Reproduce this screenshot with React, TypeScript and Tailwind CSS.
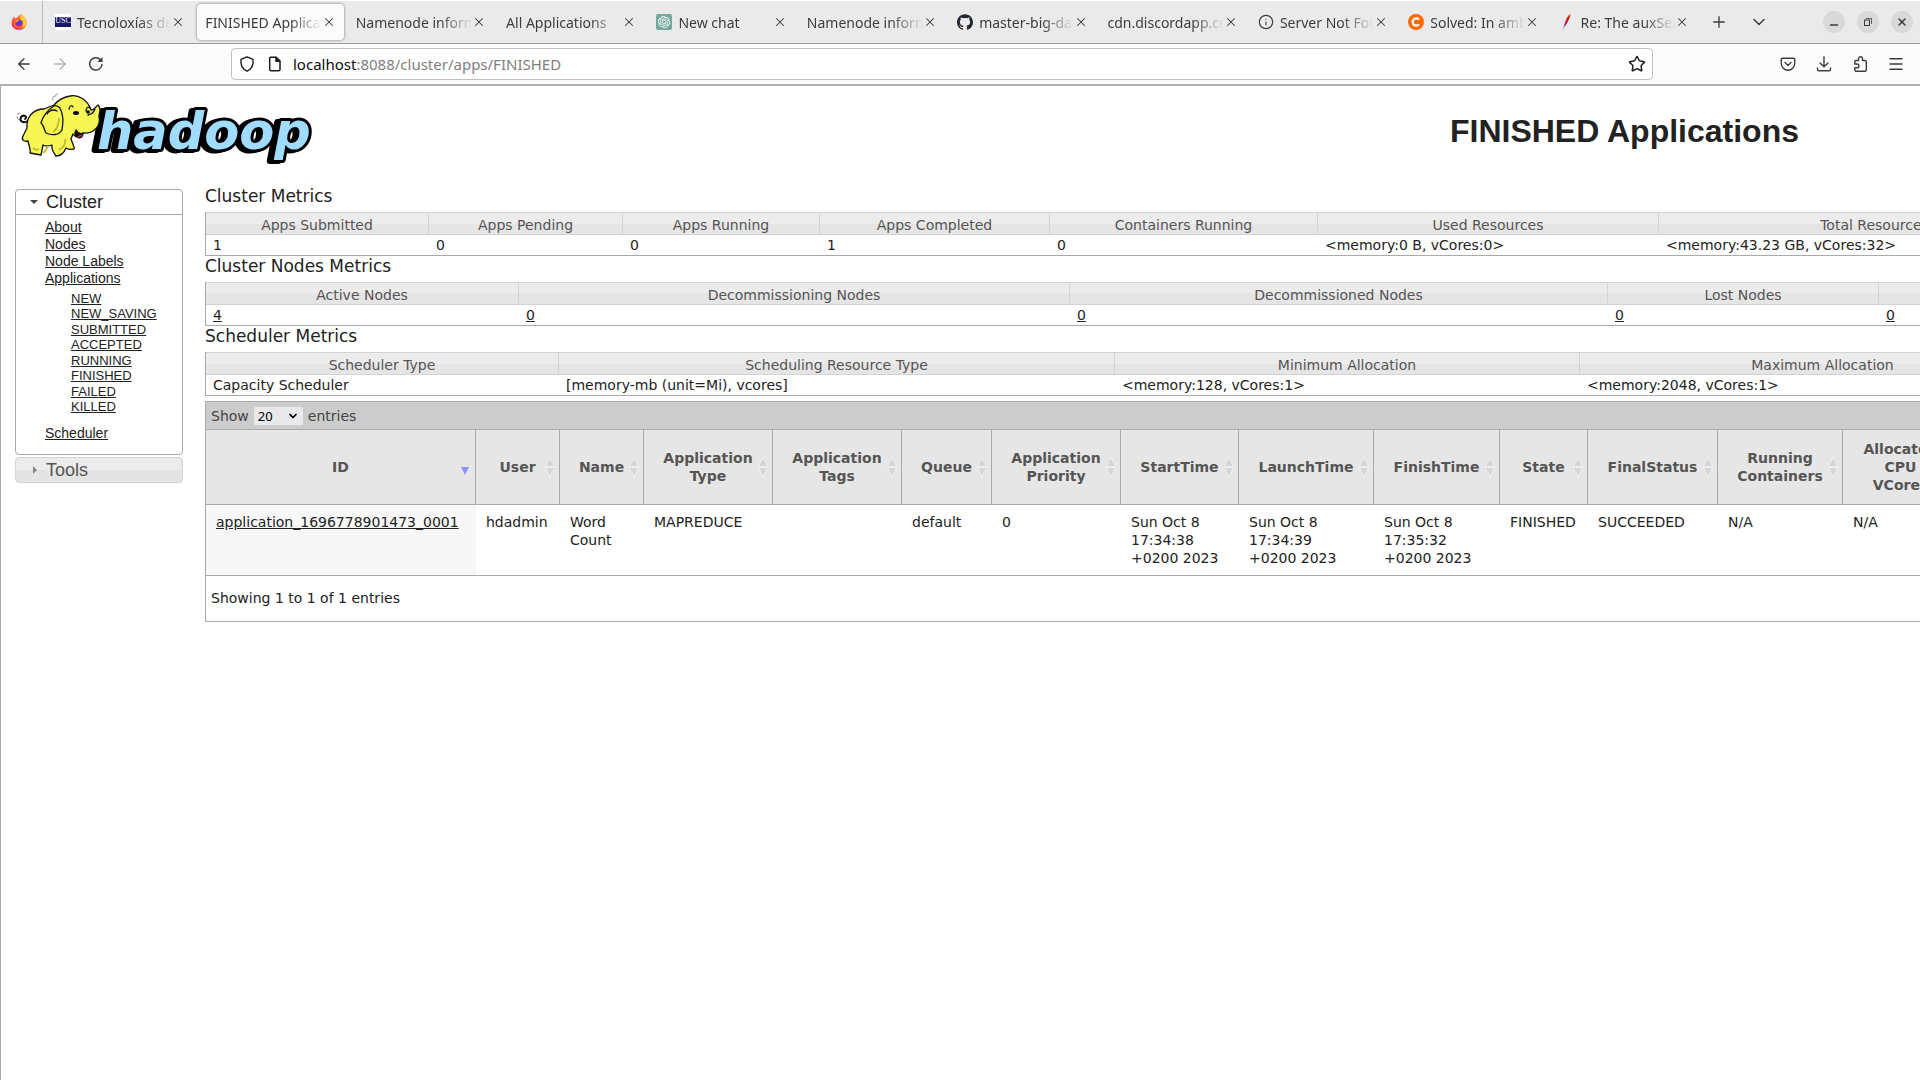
import React from "react";
import { SiOpenai, SiGithub } from "react-icons/si";
import { ArrowLeft, ArrowRight, ChevronDown, Info, Menu, Minus, Plus, Star, X } from "lucide-react";

const FirefoxIcon = () => (
  <svg viewBox="0 0 16 16" className="size-4" aria-hidden="true">
    <path d="M8 1.5C11 0 11 0 11.5 2.5C15 4.500 15.800 7 15.500 9.500C15 13.500 12 16 8 16C3.800 16 .6 13 .6 9C.6 6.500 1.500 4.200 3 2.500L4 4.500C5.500 3.800 7 3.500 8 1.5Z" fill="#ff5a36" />
    <path d="M9.500 0C14 2.500 16 6 15.500 9.500C14.800 12.500 12.500 14 10.500 13.500C13 11 12.500 7 9.500 5.500C8.500 3.500 8.500 1.500 9.500 0Z" fill="#ffc832" />
    <path d="M2 10C3 14 7 15.500 11 14C9 16 5 16 3 14C1 12.500 .5 10.500 1 8Z" fill="#ff2a6d" />
    <circle cx="8" cy="9" r="3.300" fill="#6a35c9" />
    <path d="M4.500 6C6 5.200 8 5.500 8.500 6.500C7 6.800 6.500 7.500 6.200 8.300C5 8.300 4.300 7.400 4.500 6Z" fill="#ff9640" />
  </svg>
);

const UscIcon = () => (
  <svg viewBox="0 0 16 16" className="size-4" aria-hidden="true">
    <rect width="16" height="16" fill="#fff" />
    <rect y="3" width="16" height="10" fill="#181866" />
    <text x="8" y="9" textAnchor="middle" fontSize="8" fill="#fff" fontFamily="Liberation Serif, serif">USC</text>
  </svg>
);

const ClouderaIcon = () => (
  <svg viewBox="0 0 16 16" className="size-4" aria-hidden="true">
    <circle cx="8" cy="8" r="8" fill="#ff6a00" />
    <path d="M11 5.400A3.700 3.700 0 1 0 11 10.600" fill="none" stroke="#fff" strokeWidth="2.200" />
  </svg>
);

const FeatherIcon = () => (
  <svg viewBox="0 0 16 16" className="size-4" aria-hidden="true">
    <path d="M11.500 0C9.500 1 7.500 4 6.600 7L8.600 7.500C10.500 4.500 11.500 2 11.500 0Z" fill="#e8622c" />
    <path d="M9.800 1.500C8.300 3 7 5.500 6 9L7.800 9.500C9.500 6.500 10.500 4 10.800 2Z" fill="#d22128" />
    <path d="M6.300 7.500C5.500 9.500 5 11.500 4.800 13L6 12.500C7 11 8 9.200 8.500 8Z" fill="#97307f" />
    <path d="M5.200 11.500L4 16" stroke="#b9a3cc" strokeWidth=".8" />
  </svg>
);

const ChatIcon = () => (
  <span className="flex size-4 items-center justify-center rounded-xs bg-[#75a99c] text-white">
    <SiOpenai className="size-3" />
  </span>
);

type Tab = { title: string; icon?: React.ReactNode; active?: boolean };

const tabs: Tab[] = [
  { title: "Tecnoloxías de xestión", icon: <UscIcon /> },
  { title: "FINISHED Applications", active: true },
  { title: "Namenode information" },
  { title: "All Applications" },
  { title: "New chat", icon: <ChatIcon /> },
  { title: "Namenode information" },
  { title: "master-big-data", icon: <SiGithub className="size-4 text-[#24292f]" /> },
  { title: "cdn.discordapp.com" },
  { title: "Server Not Found", icon: <Info className="size-4" strokeWidth={1.8} /> },
  { title: "Solved: In ambari", icon: <ClouderaIcon /> },
  { title: "Re: The auxService", icon: <FeatherIcon /> },
];

const TabStrip = () => (
  <div className="flex h-11 items-stretch border-t border-b border-t-white border-b-[#9c9c9c] bg-[#eaeaea] text-[#3d3d3d]">
    <button aria-label="Firefox View" className="flex w-[43px] shrink-0 items-center justify-center border-r border-[#bdbdbd] pr-1">
      <FirefoxIcon />
    </button>
    <div className="flex min-w-0 flex-1 pl-0.5">
      {tabs.map((t, i) => (
        <div key={i} className="min-w-0 flex-1 px-0.5 py-[3px]">
          <div
            className={
              t.active
                ? "flex h-full items-center rounded bg-[#fbfbfb] pr-2 pl-2 shadow-[0_0_3px_rgba(0,0,0,0.5)]"
                : "flex h-full items-center pr-2 pl-2"
            }
          >
            {t.icon && <span className="mr-1.5 shrink-0">{t.icon}</span>}
            <span className="min-w-0 flex-1 overflow-hidden pt-0.5 text-sm whitespace-nowrap [mask-image:linear-gradient(to_right,#000_calc(100%-32px),transparent)]">
              {t.title}
            </span>
            <button aria-label="Close tab" className="shrink-0">
              <X className="size-3.5" strokeWidth={1.8} />
            </button>
          </div>
        </div>
      ))}
    </div>
    <div className="flex shrink-0 items-center">
      <button aria-label="New tab" className="flex w-10 justify-center"><Plus className="size-[18px]" strokeWidth={1.8} /></button>
      <button aria-label="List all tabs" className="flex w-10 justify-center"><ChevronDown className="size-5" strokeWidth={1.8} /></button>
      <div className="ml-11 flex gap-3 pr-[7px]">
        <button aria-label="Minimize" className="flex size-[22px] items-end justify-center rounded-full bg-[#d9d9d9] pb-0.5"><Minus className="size-3" strokeWidth={3} /></button>
        <button aria-label="Restore" className="flex size-[22px] items-center justify-center rounded-full bg-[#d9d9d9]">
          <svg viewBox="0 0 10 10" className="size-2.5" fill="none" stroke="#3d3d3d" aria-hidden="true">
            <rect x="1.500" y="3" width="5" height="5.500" />
            <path d="M3 1.500H8.500V7" strokeWidth=".8" />
          </svg>
        </button>
        <button aria-label="Close" className="flex size-[22px] items-center justify-center rounded-full bg-[#d9d9d9]"><X className="size-3" strokeWidth={3} /></button>
      </div>
    </div>
  </div>
);

const Toolbar = () => (
  <div className="flex h-[42px] items-center border-b-2 border-[#b1b1b1] bg-[#fbfbfb] px-1.5 text-[#3d3d3d]">
    <button aria-label="Back" className="flex w-9 justify-center"><ArrowLeft className="size-[18px]" strokeWidth={1.8} /></button>
    <button aria-label="Forward" className="flex w-9 justify-center text-[#b5b5b5]"><ArrowRight className="size-[18px]" strokeWidth={1.8} /></button>
    <button aria-label="Reload" className="flex w-9 justify-center">
      <svg viewBox="0 0 16 16" className="size-4" fill="none" stroke="currentColor" strokeWidth="1.500" strokeLinecap="round" aria-hidden="true">
        <path d="M14 8.500A6.200 6.200 0 1 1 12.500 3.800" />
        <path d="M14.500 1V6H9.500Z" fill="currentColor" stroke="none" />
      </svg>
    </button>
    <div className="mr-[117px] ml-[117px] flex h-8 min-w-0 flex-1 items-center rounded border border-[#c0c0c0] bg-white pr-1.5 pl-[7px] text-[#1c1c1c]">
      <svg viewBox="0 0 16 16" className="size-4 shrink-0" fill="none" stroke="currentColor" strokeWidth="1.400" strokeLinejoin="round" aria-hidden="true">
        <path d="M8 .8L14 3.400C14.600 8 13 13 8 15.200C3 13 1.400 8 2 3.400Z" />
      </svg>
      <svg viewBox="0 0 16 16" className="ml-3 size-4 shrink-0" fill="none" stroke="currentColor" strokeWidth="1.500" strokeLinejoin="round" aria-hidden="true">
        <path d="M3.500 1.200H9L13 5.200V13.500Q13 14.800 11.700 14.800H4Q2.700 14.800 2.700 13.500V2Q2.700 1.200 3.500 1.200Z" />
        <path d="M9 1.200V5.200H13Z" fill="currentColor" />
      </svg>
      <p className="ml-2.5 flex-1 text-[15px] leading-5 text-[#808080]">
        <span className="text-[#0c0c0c]">localhost</span>:8088/cluster/apps/FINISHED
      </p>
      <button aria-label="Bookmark this page"><Star className="size-[18px]" strokeWidth={2} /></button>
    </div>
    <button aria-label="Save to Pocket" className="flex w-9 justify-center">
      <svg viewBox="0 0 16 16" className="size-4" fill="none" stroke="currentColor" strokeWidth="1.400" strokeLinecap="round" strokeLinejoin="round" aria-hidden="true">
        <path d="M2.500 2.200H13.500Q14.700 2.200 14.700 3.400V7.500A6.700 6.700 0 0 1 1.300 7.500V3.400Q1.300 2.200 2.500 2.200Z" />
        <path d="M5 6.500L8 9.400L11 6.500" />
      </svg>
    </button>
    <button aria-label="Downloads" className="flex w-9 justify-center">
      <svg viewBox="0 0 16 16" className="size-4" fill="none" stroke="currentColor" strokeWidth="1.400" strokeLinecap="round" strokeLinejoin="round" aria-hidden="true">
        <path d="M8 .8V10.500M4 7L8 10.800L12 7M1.500 12V13.500Q1.500 14.800 2.800 14.800H13.200Q14.500 14.800 14.500 13.500V12" />
      </svg>
    </button>
    <button aria-label="Extensions" className="flex w-9 justify-center">
      <svg viewBox="0 0 16 16" className="size-4" fill="none" stroke="currentColor" strokeWidth="1.400" strokeLinejoin="round" aria-hidden="true">
        <path d="M6.500 4.500V2.800A2 2 0 0 1 10.500 2.800V4.500H13Q14.300 4.500 14.300 5.800V14Q14.300 15.200 13 15.200H4Q2.800 15.200 2.800 14V11.800H5A1.900 1.900 0 0 0 5 8H2.800V5.800Q2.800 4.500 4 4.500Z" />
      </svg>
    </button>
    <button aria-label="Menu" className="flex w-9 justify-center"><Menu className="size-[18px]" strokeWidth={1.8} /></button>
  </div>
);

const HadoopLogo = () => (
  <svg viewBox="0 0 300 76" className="h-[76px] w-[300px] overflow-visible" role="img" aria-label="Hadoop">
    <text
      x="81"
      y="57"
      fontFamily="DejaVu Sans, sans-serif"
      fontWeight="bold"
      fontStyle="italic"
      fontSize="51"
      fill="#9fdcff"
      stroke="#000"
      strokeWidth="6"
      strokeLinejoin="round"
      className="[filter:drop-shadow(-4px_1px_0_#000)] [paint-order:stroke]"
    >
      hadoop
    </text>
    <g stroke="#111" strokeWidth="1.300" strokeLinejoin="round" strokeLinecap="round" fill="#f6f754">
      <path d="M12 29C7 32 3 29 5 25C8 22 12 25 9 27" fill="none" strokeWidth="2" />
      <path d="M28 17C18 17 10 24 11 36L7 44C5 48 8 50 12 49C13 54 15 58 14 61L25 63L27 53C30 55 33 54 36 53C35 57 37 60 40 64C44 64 48 61 50 56C53 58 60 58 58 55L55 47L57 42C61 47 65 45 67 41C78 42 85 34 83 24C83 21 86 17 82 13C80 14 79 18 75 18C72 8 62 2 54 4C48 5 42 8 38 13Z" />
      <path d="M38 14C31 18 26 26 25 31C28 33 28 38 30 41C36 44 43 43 46 38C47 30 48 24 44 16C42 14 40 13 38 14Z" />
      <path d="M31 22C33 18 38 17 41 19" fill="none" />
      <path d="M59 41C60 48 67 47 67 41C64 43 62 41 60 38Z" fill="#111" />
      <path d="M62 45Q64 43 66 44" stroke="#e0402a" fill="none" />
      <path d="M53 17C54 13 56 13 57 15M70 19C70 16 72 14 74 16M72 23Q77 22 79 17" fill="none" />
    </g>
    <path d="M32 54C30 58 29 60 27 61M43 58C48 55 50 51 49 47M37 40C41 38 43 31 43 26M17 56Q20 59 23 57" fill="none" stroke="#c3bf2c" strokeWidth="2" />
    <ellipse cx="60" cy="21" rx="3" ry="2" fill="#111" />
    <ellipse cx="72" cy="20" rx="2" ry="1.700" fill="#111" />
    <path d="M38 4Q36 5 37 8M42 2Q38 3 39 5M1 24Q1 27 3 28M4 21Q1 21 2 23" fill="none" stroke="#777" strokeWidth=".8" />
  </svg>
);

const linkCls = "underline underline-offset-1";
const clusterLinks = ["About", "Nodes", "Node Labels", "Applications"];
const states = ["NEW", "NEW_SAVING", "SUBMITTED", "ACCEPTED", "RUNNING", "FINISHED", "FAILED", "KILLED"];

const Sidebar = () => (
  <nav className="w-[168px] shrink-0">
    <section className="rounded border border-[#aaa]">
      <h3 className="flex h-[25px] items-center border-b border-[#aaa] pl-[14px] text-lg leading-6">
        <svg viewBox="0 0 8 4" className="mr-2 h-1 w-2" aria-hidden="true"><path d="M0 0H8L4 4Z" fill="#444" /></svg>
        Cluster
      </h3>
      <ul className="pt-1 pb-3 pl-[29px] text-sm leading-[17px]">
        {clusterLinks.map((l) => (
          <li key={l}><a href="#" className={linkCls}>{l}</a></li>
        ))}
        <li className="py-1">
          <ul className="mb-[7px] flex h-[123px] flex-col justify-between pl-[26px] text-[13px] leading-[15px]">
            {states.map((s) => (
              <li key={s}><a href="#" className={linkCls}>{s}</a></li>
            ))}
          </ul>
        </li>
        <li><a href="#" className={linkCls}>Scheduler</a></li>
      </ul>
    </section>
    <h3 className="mt-0.5 flex h-[26px] items-center rounded border border-[#d3d3d3] bg-linear-to-b from-[#ececec] from-50% to-[#e4e4e4] to-50% pl-[17px] text-lg leading-6 text-[#555]">
      <svg viewBox="0 0 4 8" className="mr-[9px] h-2 w-1" aria-hidden="true"><path d="M0 0V8L4 4Z" fill="#888" /></svg>
      Tools
    </h3>
  </nav>
);

type Col = { label: string; value: string; w: string };

const clusterMetrics: Col[] = [
  { label: "Apps Submitted", value: "1", w: "w-[223px]" },
  { label: "Apps Pending", value: "0", w: "w-[194px]" },
  { label: "Apps Running", value: "0", w: "w-[197px]" },
  { label: "Apps Completed", value: "1", w: "w-[230px]" },
  { label: "Containers Running", value: "0", w: "w-[268px]" },
  { label: "Used Resources", value: "<memory:0 B, vCores:0>", w: "w-[341px]" },
  { label: "Total Resources", value: "<memory:43.23 GB, vCores:32>", w: "w-[432px]" },
];

const nodeMetrics: Col[] = [
  { label: "Active Nodes", value: "4", w: "w-[313px]" },
  { label: "Decommissioning Nodes", value: "0", w: "w-[551px]" },
  { label: "Decommissioned Nodes", value: "0", w: "w-[538px]" },
  { label: "Lost Nodes", value: "0", w: "w-[271px]" },
  { label: "", value: "0", w: "w-[212px]" },
];

const schedulerMetrics: Col[] = [
  { label: "Scheduler Type", value: "Capacity Scheduler", w: "w-[353px]" },
  { label: "Scheduling Resource Type", value: "[memory-mb (unit=Mi), vcores]", w: "w-[556px]" },
  { label: "Minimum Allocation", value: "<memory:128, vCores:1>", w: "w-[465px]" },
  { label: "Maximum Allocation", value: "<memory:2048, vCores:1>", w: "w-[486px]" },
  { label: "", value: "", w: "w-[25px]" },
];

const Metrics = ({ title, cols, links }: { title: string; cols: Col[]; links?: boolean }) => (
  <section>
    <h3 className="h-[26px] text-[17px] leading-5">{title}</h3>
    <table className="w-[1885px] table-fixed border-separate border-spacing-0 border-l border-[#aaa]">
      <thead>
        <tr>
          {cols.map((c, i) => (
            <th key={i} className={`${c.w} h-[23px] border-y border-r border-[#d3d3d3] bg-linear-to-b from-[#ececec] from-50% to-[#e5e5e5] to-50% p-0 pt-0.5 text-center leading-[18px] font-normal text-[#555]`}>
              {c.label}
            </th>
          ))}
        </tr>
      </thead>
      <tbody>
        <tr>
          {cols.map((c, i) => (
            <td key={i} className="h-[21px] border-b border-[#aaa] p-0 pl-[7px] leading-[18px] whitespace-nowrap">
              {links ? <a href="#" className={linkCls}>{c.value}</a> : c.value}
            </td>
          ))}
        </tr>
      </tbody>
    </table>
  </section>
);

const appCols: Col[] = [
  { label: "ID", value: "application_1696778901473_0001", w: "w-[270px]" },
  { label: "User", value: "hdadmin", w: "w-[84px]" },
  { label: "Name", value: "Word Count", w: "w-[84px]" },
  { label: "Application Type", value: "MAPREDUCE", w: "w-[129px]" },
  { label: "Application Tags", value: "", w: "w-[129px]" },
  { label: "Queue", value: "default", w: "w-[90px]" },
  { label: "Application Priority", value: "0", w: "w-[129px]" },
  { label: "StartTime", value: "Sun Oct 8 17:34:38 +0200\u00a02023", w: "w-[118px]" },
  { label: "LaunchTime", value: "Sun Oct 8 17:34:39 +0200\u00a02023", w: "w-[135px]" },
  { label: "FinishTime", value: "Sun Oct 8 17:35:32 +0200\u00a02023", w: "w-[126px]" },
  { label: "State", value: "FINISHED", w: "w-[88px]" },
  { label: "FinalStatus", value: "SUCCEEDED", w: "w-[130px]" },
  { label: "Running Containers", value: "N/A", w: "w-[125px]" },
  { label: "Allocated CPU VCores", value: "N/A", w: "w-[116px]" },
  { label: "", value: "", w: "w-[132px]" },
];

const SortIcon = () => (
  <svg viewBox="0 0 10 20" className="absolute top-1/2 right-1 h-5 w-2.5 -translate-y-1/2" aria-hidden="true">
    <path d="M5 .5L9.500 9.500H.5ZM5 19.500L9.500 10.500H.5Z" fill="#d6d6d6" stroke="#f6f6f6" strokeWidth="1" strokeDasharray="2 1" />
  </svg>
);

const AppsTable = () => (
  <section className="mt-[5px] w-[1885px] border border-[#aaa]">
    <div className="flex h-[27px] items-center bg-[#ccc] pl-[5px] text-[#444]">
      <label htmlFor="page-size">Show</label>
      <span className="relative mx-[5px] flex items-center">
        <select id="page-size" defaultValue="20" className="h-[18px] w-[49px] appearance-none bg-[#e9e9ed] pl-1 font-['Noto_Sans',sans-serif] text-[13px] leading-[18px] text-black">
          <option>20</option>
          <option>40</option>
          <option>100</option>
        </select>
        <ChevronDown className="pointer-events-none absolute right-1 size-3 text-black" strokeWidth={3.5} />
      </span>
      entries
    </div>
    <table className="w-full table-fixed border-separate border-spacing-0">
      <thead>
        <tr>
          {appCols.map((c, i) => (
            <th key={i} className={`${c.w} relative h-[76px] border-y border-r border-[#aaa] bg-[#e6e6e6] px-4 py-0 text-center leading-[18px] text-[#555]`}>
              {c.label}
              {i === 0 ? (
                <svg viewBox="0 0 8 8" className="absolute right-1.5 bottom-[29px] size-2" aria-hidden="true"><path d="M0 0H8L4 8Z" fill="#8d91ff" /></svg>
              ) : (
                <SortIcon />
              )}
            </th>
          ))}
        </tr>
      </thead>
      <tbody>
        <tr>
          {appCols.map((c, i) => (
            <td key={i} className={i === 0 ? "h-[71px] border-b border-[#aaa] bg-[#f7f7f7] px-2.5 pt-2 align-top leading-[18px]" : "h-[71px] border-b border-[#aaa] pt-2 pr-2 pl-2.5 align-top leading-[18px]"}>
              {i === 0 ? <a href="#" className={linkCls}>{c.value}</a> : c.value}
            </td>
          ))}
        </tr>
      </tbody>
    </table>
    <p className="pt-[13px] pb-[14px] pl-[5px] leading-[18px]">Showing 1 to 1 of 1 entries</p>
  </section>
);

export default function App() {
  return (
    <div className="flex min-h-screen flex-col overflow-hidden bg-white font-['Noto_Sans',sans-serif]">
      <TabStrip />
      <Toolbar />
      <div className="flex-1 border-l border-[#aaa] font-['Liberation_Sans',Arial,sans-serif] text-[#222]">
        <header className="flex items-end justify-between pt-1.5 pr-[121px] pl-[15px]">
          <HadoopLogo />
          <h1 className="pb-[17px] text-[32px] leading-10 font-bold">FINISHED Applications</h1>
        </header>
        <div className="flex pt-[21px] pl-[14px]">
          <Sidebar />
          <main className="-mt-[3px] ml-[22px] min-w-0 flex-1 overflow-hidden font-['DejaVu_Sans',sans-serif] text-sm">
            <Metrics title="Cluster Metrics" cols={clusterMetrics} />
            <Metrics title="Cluster Nodes Metrics" cols={nodeMetrics} links />
            <Metrics title="Scheduler Metrics" cols={schedulerMetrics} />
            <AppsTable />
          </main>
        </div>
      </div>
    </div>
  );
}
